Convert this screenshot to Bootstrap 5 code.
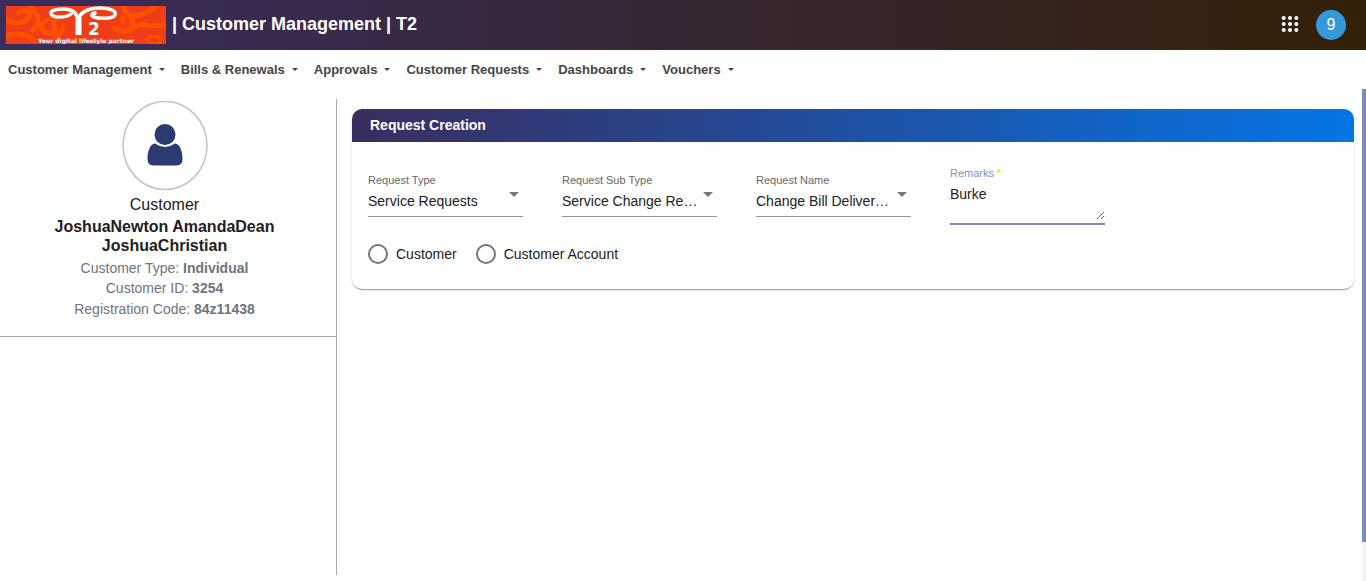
<!DOCTYPE html>
<html lang="en">
<head>
<meta charset="utf-8">
<meta name="viewport" content="width=device-width, initial-scale=1">
<title>Customer Management | T2</title>
<link href="https://cdn.jsdelivr.net/npm/bootstrap@5.3.0/dist/css/bootstrap.min.css" rel="stylesheet">
<style>
  body { font-family: "Liberation Sans", Arial, sans-serif; font-size: 14px; color: #212121; background: #fff; }
  .topbar { height: 50px; padding: 0 20px 0 6px; background: linear-gradient(to right, #3a2d5f, #332008); color: #fff; }
  .brand-title { font-size: 18px; line-height: 24px; padding-bottom: 2px; margin-left: 6px; }
  .user-dot { width: 30px; height: 30px; background: #3498db; color: #fff; font-size: 16px; line-height: 30px; }
  .user-dot:hover { background: #3498db; color: #fff; }
  .menu-bar { height: 39px; padding-left: 8px; gap: 16px; }
  .menu-link { font-size: 13px; font-weight: bold; color: #444; line-height: 20px; }
  .menu-link::after { border-top-width: 3px; border-left-width: 3px; border-right-width: 3px; margin-left: 7px; vertical-align: 3px; }
  .workspace { height: calc(100vh - 89px); }
  .side-panel { width: 337px; margin: 10px 0 6px; border-right: 1px solid #a9a9a9; }
  .profile { padding: 0 47px 17px 40px; border-bottom: 1px solid #a9a9a9; }
  .portrait { width: 88px; height: 92px; }
  .profile-kind { font-size: 16px; line-height: 24px; margin-top: 2px; }
  .profile-name { font-size: 16px; line-height: 19px; font-weight: bold; margin: 0 0 3px; }
  .profile-facts { color: #6c757d; line-height: 20px; }
  .profile-facts li:last-child { padding-top: 1px; }
  .main-panel { padding: 20px 8px 0 15px; }
  .request-card { border: 0; border-radius: 10px; box-shadow: 0 2px 1px -1px rgba(0,0,0,.2), 0 1px 1px rgba(0,0,0,.14), 0 1px 3px rgba(0,0,0,.12); }
  .request-card .card-header { border: 0; border-radius: 10px 10px 0 0; padding: 6px 18px 7px; background: linear-gradient(to right, #3a2d5f, #0575e6); }
  .request-card h1 { font-size: 14px; line-height: 20px; }
  .request-card .card-body { padding: 24px 16px 25px; }
  .field { width: 80%; }
  .field label { display: block; font-size: 11px; line-height: 14px; color: #666; }
  .field select { display: block; width: 100%; height: 30px; margin-bottom: 1px; padding: 0 18px 0 0; border: 0; border-bottom: 1px solid #949494; border-radius: 0; font-size: 14px; color: #212121; outline: 0; appearance: none;
    background: transparent url("data:image/svg+xml,%3Csvg xmlns='http://www.w3.org/2000/svg' width='10' height='5'%3E%3Cpath d='M0 0h10L5 5z' fill='%23757575'/%3E%3C/svg%3E") no-repeat right 4px top 5px; }
  .field .active-label { color: #8690c0; }
  .field .active-label span { color: #ffd740; font-weight: bold; }
  .area-line { border-bottom: 2px solid #7f8ab8; padding-bottom: 3px; }
  .field textarea { display: block; width: 100%; height: 40px; padding: 6px 0 0; border: 0; outline: 0; font-size: 14px; line-height: 16px; color: #212121; resize: vertical; background: transparent; overflow: auto; }
  .choices { margin-top: 19px; gap: 19px; }
  .choices label { line-height: 20px; }
  .choices input { appearance: none; width: 20px; height: 20px; margin: 0; border: 2px solid #757575; border-radius: 50%; }
  .choices input:checked { background: radial-gradient(#757575 5px, transparent 6px); }
  .scroll-rail { width: 4px; background: #f3f3f3; }
  .scroll-rail div { height: 92%; background: #7f8ab8; }
</style>
</head>
<body>
<header class="topbar d-flex align-items-center">
  <svg width="160" height="38" viewBox="0 0 160 38" role="img" aria-label="T2 logo" class="flex-shrink-0">
    <rect width="160" height="38" fill="#ef3d17"/>
    <g fill="none" stroke="#ff5000" stroke-width="5" stroke-linecap="round">
      <path d="M0 13C9 20 21 17 23 10C24 4 17 3 13 7"/>
      <path d="M0 30C12 25 22 29 29 35"/>
      <path d="M24 1C34 10 34 17 27 24"/>
      <path d="M50 14C39 11 31 20 38 25C46 31 53 24 48 18"/>
      <path d="M49 31Q56 29 57 20"/>
      <path d="M108 22C119 29 130 23 126 13C123 6 114 9 117 16"/>
      <path d="M118 2C119 10 130 13 143 5L150 1"/>
      <path d="M127 22C138 13 145 24 160 18"/>
    </g>
    <ellipse cx="148" cy="34" rx="7" ry="4" fill="none" stroke="#ff5000" stroke-width="3"/>
    <g fill="none" stroke="#fff" stroke-linecap="round">
      <path d="M72 16C72 6 65 3 57 3C49 3 44 5 45 8C47 12 60 12 65 8" stroke-width="3.500"/>
      <path d="M72 15C73 6 83 2 94 2C104 2 111 5 109 9C107 13 94 13 88 11C85 10 85 8 89 7" stroke-width="3.500"/>
      <path d="M72.500 29V12" stroke-width="6" stroke-linecap="butt"/>
    </g>
    <text x="82" y="29" font-family="DejaVu Sans, sans-serif" font-size="17" font-weight="bold" fill="#fff">2</text>
    <text x="80" y="37" text-anchor="middle" font-family="DejaVu Sans, sans-serif" font-size="6" font-weight="bold" fill="#fff">Your digital lifestyle partner</text>
  </svg>
  <div class="brand-title fw-bold">| Customer Management | T2</div>
  <button type="button" class="btn p-0 border-0 ms-auto me-3 d-flex" aria-label="Apps">
    <svg width="20" height="20" viewBox="0 0 20 20" fill="#fff">
      <circle cx="3.700" cy="3" r="2"/><circle cx="10" cy="3" r="2"/><circle cx="16.300" cy="3" r="2"/>
      <circle cx="3.700" cy="9" r="2"/><circle cx="10" cy="9" r="2"/><circle cx="16.300" cy="9" r="2"/>
      <circle cx="3.700" cy="15" r="2"/><circle cx="10" cy="15" r="2"/><circle cx="16.300" cy="15" r="2"/>
    </svg>
  </button>
  <button type="button" class="user-dot btn rounded-circle p-0 border-0">9</button>
</header>

<nav class="menu-bar d-flex align-items-center" aria-label="Main">
  <a href="#" class="menu-link dropdown-toggle text-decoration-none">Customer Management</a>
  <a href="#" class="menu-link dropdown-toggle text-decoration-none">Bills &amp; Renewals</a>
  <a href="#" class="menu-link dropdown-toggle text-decoration-none">Approvals</a>
  <a href="#" class="menu-link dropdown-toggle text-decoration-none">Customer Requests</a>
  <a href="#" class="menu-link dropdown-toggle text-decoration-none">Dashboards</a>
  <a href="#" class="menu-link dropdown-toggle text-decoration-none">Vouchers</a>
</nav>

<div class="workspace d-flex">
  <aside class="side-panel flex-shrink-0">
    <div class="profile text-center">
      <svg class="portrait d-block mx-auto" viewBox="0 0 88 92" aria-hidden="true">
        <ellipse cx="44" cy="46.500" rx="42" ry="44" fill="none" stroke="#bfc1d6" stroke-width="1.500"/>
        <g fill="#2d3a6f">
          <ellipse cx="44" cy="35.500" rx="10.500" ry="10.500"/>
          <path d="M34 44.500Q44 51.500 54 44.500C59 45 61.500 52 61.500 60Q61.500 66.500 55.500 66.500H32.500Q26.500 66.500 26.500 60C26.500 52 29 45 34 44.500Z"/>
        </g>
      </svg>
      <div class="profile-kind">Customer</div>
      <h2 class="profile-name">JoshuaNewton AmandaDean JoshuaChristian</h2>
      <ul class="profile-facts list-unstyled mb-0">
        <li>Customer Type: <b>Individual</b></li>
        <li>Customer ID: <b>3254</b></li>
        <li>Registration Code: <b>84z11438</b></li>
      </ul>
    </div>
  </aside>

  <main class="main-panel flex-grow-1">
    <form class="request-card card">
      <div class="card-header text-white">
        <h1 class="fw-bold mb-0">Request Creation</h1>
      </div>
      <div class="card-body">
        <div class="row row-cols-5 g-0 align-items-center">
          <div class="col"><div class="field">
            <label for="reqType">Request Type</label>
            <select id="reqType"><option>Service Requests</option></select>
          </div></div>
          <div class="col"><div class="field">
            <label for="reqSub">Request Sub Type</label>
            <select id="reqSub"><option>Service Change Re…</option></select>
          </div></div>
          <div class="col"><div class="field">
            <label for="reqName">Request Name</label>
            <select id="reqName"><option>Change Bill Deliver…</option></select>
          </div></div>
          <div class="col"><div class="field">
            <label for="remarks" class="active-label">Remarks <span>*</span></label>
            <div class="area-line"><textarea id="remarks" required>Burke</textarea></div>
          </div></div>
        </div>
        <div class="choices d-flex">
          <label class="d-flex align-items-center gap-2"><input type="radio" name="level">Customer</label>
          <label class="d-flex align-items-center gap-2"><input type="radio" name="level">Customer Account</label>
        </div>
      </div>
    </form>
  </main>
  <div class="scroll-rail flex-shrink-0" aria-hidden="true"><div></div></div>
</div>
<script src="https://cdn.jsdelivr.net/npm/bootstrap@5.3.0/dist/js/bootstrap.bundle.min.js"></script>
</body>
</html>
